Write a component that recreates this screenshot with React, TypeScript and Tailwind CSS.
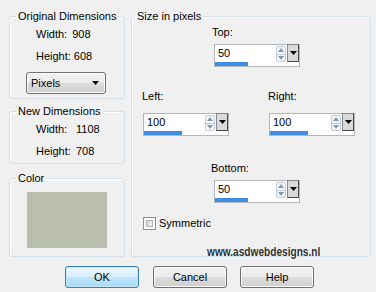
import React from "react";

const font = "font-['Liberation_Sans',Arial,sans-serif]";

function SpinField({ value, bar }: { value: string; bar: number }) {
  return (
    <div className="w-[86px] h-[23px] border border-[#b3b6bb] bg-white flex flex-col">
      <div className="flex h-[17px]">
        <div className="flex-1 pl-[3px] leading-[17px] text-[11px] text-black">{value}</div>
        <div className="w-[10px] h-[16px] mt-[1px] border border-[#c3cad3] rounded-[2px] bg-[#f4f6f9] flex flex-col">
          <div className="flex-1 flex items-center justify-center border-b border-[#c3cad3]">
            <svg width="6" height="4" viewBox="0 0 6 4">
              <path d="M3 0 L6 4 L0 4 Z" fill="#7f98b8" />
            </svg>
          </div>
          <div className="flex-1 flex items-center justify-center">
            <svg width="6" height="4" viewBox="0 0 6 4">
              <path d="M0 0 L6 0 L3 4 Z" fill="#7f98b8" />
            </svg>
          </div>
        </div>
        <div className="w-[12px] h-[18px] -mt-[1px] ml-[1px] border border-[#4a4a4a] border-t-[#8a8a8a] border-l-[#8a8a8a] bg-[#dadada] flex items-center justify-center">
          <svg width="7" height="4" viewBox="0 0 7 4">
            <path d="M0 0 L7 0 L3.5 4 Z" fill="#000" />
          </svg>
        </div>
      </div>
      <div className="h-[4px] bg-white">
        <div className="h-[4px] bg-[#3d8ee3]" style={{ width: bar }} />
      </div>
    </div>
  );
}

function Btn({ label, primary }: { label: string; primary?: boolean }) {
  return (
    <div
      className={
        "w-[74px] h-[22px] rounded-[3px] border flex items-center justify-center text-[11px] text-black " +
        (primary
          ? "border-[#3c7fb1] bg-[linear-gradient(180deg,#eaf6fd_0%,#d9f0fc_50%,#bee6fd_50%,#a7d9f5_100%)] shadow-[inset_0_0_0_1px_#c4e9fb]"
          : "border-[#707070] bg-[linear-gradient(180deg,#f2f2f2_0%,#ebebeb_50%,#dddddd_50%,#cfcfcf_100%)] shadow-[inset_0_0_0_1px_#fcfcfc]")
      }
    >
      {label}
    </div>
  );
}

export default function App() {
  return (
    <div className={"relative w-[376px] h-[292px] bg-[#f0f0f0] overflow-hidden text-[11px] leading-[13px] text-black " + font}>
      <div className="flex pt-[10px] pl-[9px]">
        {/* Left column */}
        <div className="w-[116px] flex flex-col">
          <fieldset className="border border-[#d5dfe5] rounded-[3px] h-[89px] shadow-[inset_1px_1px_0_#fff]">
            <legend className="ml-[6px] px-[2px] leading-[13px]">Original Dimensions</legend>
            <div className="ml-[26px] mt-[5px] flex flex-col gap-y-[9px] leading-[13px]">
              <div className="flex">
                <span>Width:</span>
                <span className="ml-[5px]">908</span>
              </div>
              <div className="flex">
                <span>Height:</span>
                <span className="ml-[3px]">608</span>
              </div>
            </div>
            <div className="ml-[16px] mt-[9px] w-[80px] h-[22px] rounded-[3px] border border-[#707070] bg-[linear-gradient(180deg,#f2f2f2_0%,#ebebeb_50%,#dddddd_50%,#cfcfcf_100%)] shadow-[inset_0_0_0_1px_#fcfcfc] flex items-center pl-[4px] pr-[6px]">
              <span className="flex-1">Pixels</span>
              <svg width="7" height="4" viewBox="0 0 7 4">
                <path d="M0 0 L7 0 L3.5 4 Z" fill="#000" />
              </svg>
            </div>
          </fieldset>

          <fieldset className="mt-[6px] border border-[#d5dfe5] rounded-[3px] h-[59px] shadow-[inset_1px_1px_0_#fff]">
            <legend className="ml-[6px] px-[2px] leading-[13px]">New Dimensions</legend>
            <div className="ml-[26px] mt-[5px] grid grid-cols-[40px_auto] gap-y-[9px] leading-[13px]">
              <span>Width:</span>
              <span>1108</span>
              <span>Height:</span>
              <span>708</span>
            </div>
          </fieldset>

          <fieldset className="mt-[8px] border border-[#d5dfe5] rounded-[3px] h-[85px] shadow-[inset_1px_1px_0_#fff]">
            <legend className="ml-[6px] px-[2px] leading-[13px]">Color</legend>
            <div className="ml-[17px] mt-[7px] w-[80px] h-[56px] bg-[#babeac]" />
          </fieldset>
        </div>

        {/* Right group */}
        <fieldset className="ml-[6px] w-[240px] h-[247px] border border-[#d5dfe5] rounded-[3px] shadow-[inset_1px_1px_0_#fff]">
          <legend className="ml-[3px] px-[2px] leading-[13px]">Size in pixels</legend>
          <div className="ml-[80px] mt-[3px]">Top:</div>
          <div className="ml-[82px] mt-[5px]">
            <SpinField value="50" bar={33} />
          </div>
          <div className="flex mt-[23px] ml-[10px]">
            <div className="w-[126px] flex flex-col">
              <div>Left:</div>
              <div className="ml-[1px] mt-[10px]">
                <SpinField value="100" bar={38} />
              </div>
            </div>
            <div className="flex flex-col">
              <div>Right:</div>
              <div className="ml-[1px] mt-[10px]">
                <SpinField value="100" bar={38} />
              </div>
            </div>
          </div>
          <div className="ml-[79px] mt-[26px]">Bottom:</div>
          <div className="ml-[82px] mt-[5px]">
            <SpinField value="50" bar={33} />
          </div>
          <div className="flex items-center ml-[11px] mt-[14px]">
            <div className="w-[13px] h-[13px] border border-[#8e8f8f] bg-white p-[2px]">
              <div className="w-full h-full bg-[linear-gradient(135deg,#cbcfd5_0%,#f6f6f6_100%)] border border-[#b0b4b9]" />
            </div>
            <span className="ml-[3px]">Symmetric</span>
          </div>
        </fieldset>
      </div>

      {/* Buttons */}
      <div className="flex mt-[9px] pl-[65px]">
        <Btn label="OK" primary />
        <div className="ml-[14px]">
          <Btn label="Cancel" />
        </div>
        <div className="ml-[13px]">
          <Btn label="Help" />
        </div>
      </div>

      {/* Watermark */}
      <div className="absolute left-[207px] top-[244px] text-[13.5px] leading-[16px] font-bold text-[#2e2e2e] scale-x-[0.75] origin-left whitespace-nowrap [text-shadow:0_0_2px_#fff,0_0_1px_#fff]">
        www.asdwebdesigns.nl
      </div>
    </div>
  );
}
